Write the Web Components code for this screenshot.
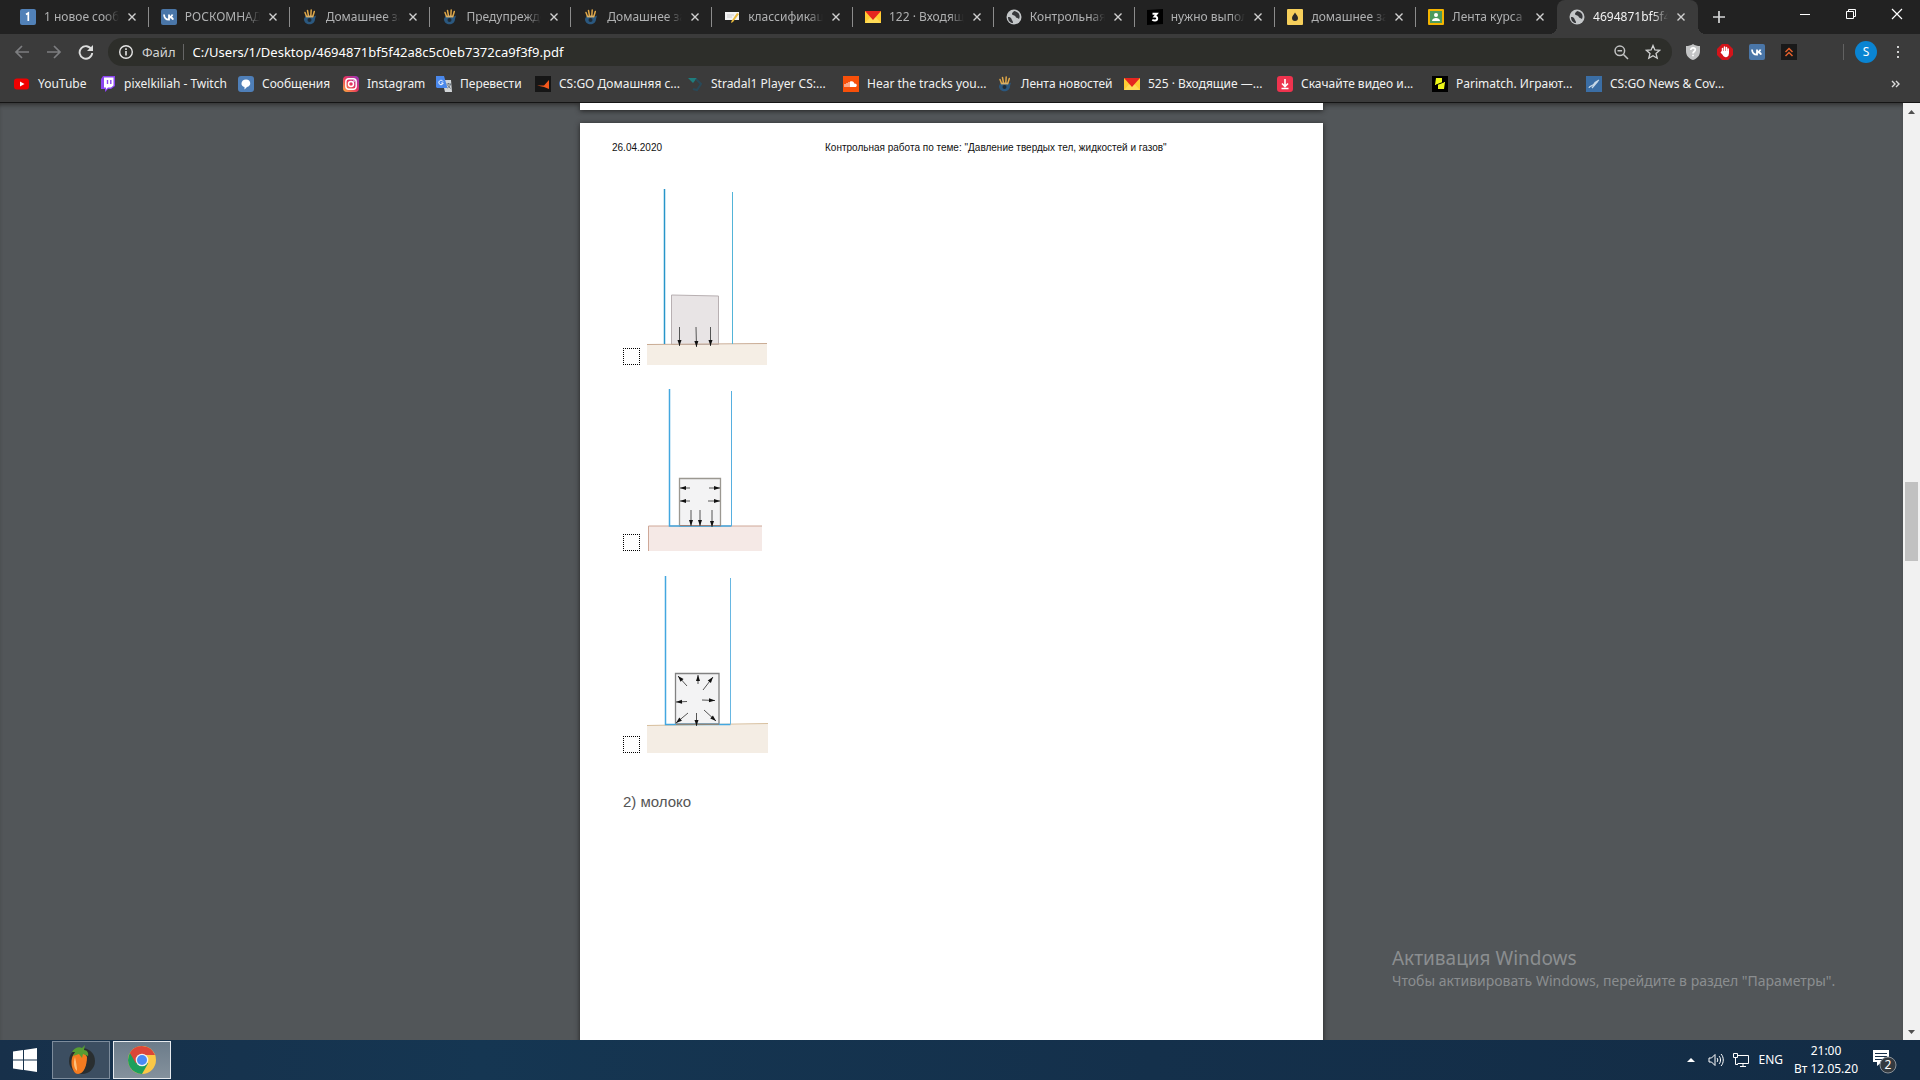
<!DOCTYPE html>
<html lang="ru">
<head>
  <meta charset="UTF-8">
  <meta name="viewport" content="width=device-width, initial-scale=1.0">
  <title>4694871bf5f42a8c5c0eb7372ca9f3f9.pdf</title>
  <style>
    body {
      margin: 0;
      font: 12px/16px "Noto Sans", "Open Sans", sans-serif;
      color: #fff;
      background: #525659;
    }
  </style>
</head>
<body>
  <desktop-screen>
    <browser-tabs slot="top">
      <tab-item icon="one">1 новое сообщение</tab-item>
      <tab-item icon="vk">РОСКОМНАДЗОР</tab-item>
      <tab-item icon="hand">Домашнее задание</tab-item>
      <tab-item icon="hand">Предупреждение</tab-item>
      <tab-item icon="hand">Домашнее задание</tab-item>
      <tab-item icon="note">классификация</tab-item>
      <tab-item icon="mail">122 · Входящие</tab-item>
      <tab-item icon="globe">Контрольная работа</tab-item>
      <tab-item icon="znania">нужно выполнить</tab-item>
      <tab-item icon="drop">домашнее задание</tab-item>
      <tab-item icon="class">Лента курса</tab-item>
      <tab-item icon="globe" active>4694871bf5f42a8c</tab-item>
    </browser-tabs>
    <browser-toolbar slot="top" url="C:/Users/1/Desktop/4694871bf5f42a8c5c0eb7372ca9f3f9.pdf"></browser-toolbar>
    <bookmarks-bar slot="top">
      <book-mark icon="youtube">YouTube</book-mark>
      <book-mark icon="twitch">pixelkiliah - Twitch</book-mark>
      <book-mark icon="message">Сообщения</book-mark>
      <book-mark icon="instagram">Instagram</book-mark>
      <book-mark icon="translate">Перевести</book-mark>
      <book-mark icon="faceit">CS:GO Домашняя с...</book-mark>
      <book-mark icon="stradal">Stradal1 Player CS:...</book-mark>
      <book-mark icon="cloud">Hear the tracks you...</book-mark>
      <book-mark icon="hand">Лента новостей</book-mark>
      <book-mark icon="mail">525 · Входящие —...</book-mark>
      <book-mark icon="download">Скачайте видео и...</book-mark>
      <book-mark icon="pari">Parimatch. Играют...</book-mark>
      <book-mark icon="news">CS:GO News &amp; Cov...</book-mark>
    </bookmarks-bar>
    <pdf-viewer>
      <pdf-page>
        <span slot="date">26.04.2020</span>
        <span slot="title">Контрольная работа по теме: "Давление твердых тел, жидкостей и газов"</span>
        <answer-option kind="solid"></answer-option>
        <answer-option kind="loose"></answer-option>
        <answer-option kind="liquid"></answer-option>
        <span slot="note">2) молоко</span>
      </pdf-page>
      <activation-note slot="over">
        <span slot="title">Активация Windows</span>
        Чтобы активировать Windows, перейдите в раздел "Параметры".
      </activation-note>
    </pdf-viewer>
    <task-bar slot="bottom"></task-bar>
  </desktop-screen>

  <script>
    const vkMark = '<rect width="16" height="16" rx="2" fill="#4a76a8"/><path d="M3 5.500c.2 3 2 5.200 5 5.200V5.500M8 8c2 0 3-1 3.500-2.500M8 8c2.500 0 3.500 1.200 4.200 2.700" fill="none" stroke="#fff" stroke-width="1.800"/>'

    // 16x16 icons of the tabs, the bookmarks and the extensions
    const icons = {
      one: '<rect width="16" height="16" rx="2" fill="#5181b8"/><path d="M6 5.500 8.300 4v8" fill="none" stroke="#fff" stroke-width="1.700"/>',
      vk: vkMark,
      hand: '<path d="M3.500 7 2 10c0 7 11 7 11 0l1-3.500-2 1z" fill="#2b587f"/><path d="M4.500 7.500 3 3.500M6.500 7 5.500 1.500M8.800 7l.4-6M10.800 7.500l1.500-5" stroke="#e0a848" stroke-width="1.500" stroke-linecap="round"/><path d="M4.500 7.500h6.500" stroke="#d8b06a" stroke-width="1.800"/><circle cx="7.500" cy="11" r="2" fill="#1f2c38"/>',
      note: '<path d="M1 3h14v8H1z" fill="#f4f4f4"/><path d="m15 5-6 8-2 1 .5-2L13 4z" fill="#e8b93c"/><path d="M3 6h7M3 8h5" stroke="#ccc"/>',
      mail: '<path d="M0 2h16v12H0z" fill="#fc3"/><path d="M0 14 5.500 8h5L16 14z" fill="#ffdb57"/><path d="M0 2h16L8 11z" fill="#e52620"/>',
      globe: '<circle cx="8" cy="8" r="7.500" fill="#c4c7c9"/><path d="M2 8c2 0 3 .5 3.500 2s1.500 1.500 1.500 4C4 14 2 11.500 2 8zM8 2c-1 1.500-2 1.500-2 3s3 1 3.500 2.500S12 9 13 10c1.500-3 .5-7-5-8z" fill="#36373a"/>',
      znania: '<path d="M0 1 16 0v15L0 16z" fill="#000"/><path d="M5.500 4.800h4.300L7.700 7.500c3.500-.2 3 4 .3 4-1 0-2-.3-2.700-.8" fill="none" stroke="#fff" stroke-width="2"/>',
      drop: '<rect width="16" height="16" rx="1" fill="#f6cf5b"/><path d="M8 3.500c1.500 2.500 3 3.500 3 5.500a3 3 0 0 1-6 0c0-2 1.500-3 3-5.500z" fill="#2b2a28"/>',
      class: '<rect width="16" height="16" rx="1" fill="#f4b400"/><path d="M2 2h12v12H2z" fill="#4d9b5d"/><circle cx="8" cy="6" r="2" fill="#fff"/><path d="M4 12c0-4 8-4 8 0z" fill="#fff"/>',
      youtube: '<rect y="2.500" width="15" height="11" rx="3" fill="#f00000"/><path d="m6 5.500 4.500 2.500L6 10.500z" fill="#fff"/>',
      twitch: '<path d="M3 0h12v10l-4 3H8l-3 3v-3H1V3z" fill="#8b45f0"/><path d="M4 1.500h9.500v8L11 11.500H8l-2 2v-2H4z" fill="#fff"/><path d="M7.500 4v4M10.800 4v4" stroke="#8b45f0" stroke-width="1.400"/>',
      message: '<rect width="16" height="16" rx="3" fill="#4f7fb8"/><path d="M8 3.500c5.500 0 5.500 7 1 7.500L6.500 13.500V11C2 10.500 2.500 3.500 8 3.500z" fill="#fff"/>',
      instagram: '<defs><linearGradient id="g" x1="0" y1="1" x2="1" y2="0"><stop stop-color="#fdb03c"/><stop offset=".5" stop-color="#e6355f"/><stop offset="1" stop-color="#9034c4"/></linearGradient></defs><rect width="16" height="16" rx="4" fill="url(#g)"/><rect x="2.800" y="2.800" width="10.400" height="10.400" rx="3" fill="none" stroke="#fff" stroke-width="1.400"/><circle cx="8" cy="8" r="2.500" fill="none" stroke="#fff" stroke-width="1.400"/><circle cx="11" cy="5" r=".8" fill="#fff"/>',
      translate: '<path d="M6 4h9l1 12H9z" fill="#d2d5d8"/><path d="M0 0h8l3.500 12H1L0 11z" fill="#4a88ec"/><path d="M7 5.500a2.200 2.200 0 1 0 .2 1.500H5.200" fill="none" stroke="#fff"/><path d="M10.500 8H15M12.500 7v1m2 0c-.5 2-1.500 3-3 4m0-3 3 3.500" stroke="#66727c" fill="none"/>',
      faceit: '<path d="M0 0h16v16H0z" fill="#161616"/><path d="M2 9.500h7L14 4v9L9 11z" fill="#f4581c"/>',
      stradal: '<path d="M1 2h9L6 7z" fill="#1f7d7d"/><path d="m9 3 5 5-4 6-4-1" fill="none" stroke="#294958" stroke-width="2"/>',
      cloud: '<path d="M0 0h16v16H0z" fill="#f8500a"/><path d="M2 8v3M4 7v4M6 6v5" stroke="#fff"/><path d="M7 5.500c3-1 4 .5 4.200 2 3-.5 3.500 3.500.8 3.500H7z" fill="#fff"/>',
      download: '<rect width="16" height="16" rx="3" fill="#ee334e"/><path d="M8 3v7M5 7.500 8 10.500l3-3M4.500 12.500h7" fill="none" stroke="#fff" stroke-width="1.600"/>',
      pari: '<path d="M0 0h16v16H0z" fill="#000"/><path d="M4 2h6v4h3l-1 7H6v-4H3z" fill="#eef818"/><path d="m4 9 8-3" stroke="#000"/>',
      news: '<path d="M0 0h16v16H0z" fill="#3b6ea5"/><path d="M3 12c0-2 4-2 5-4s3-3 5-4M6 12l6-7" fill="none" stroke="#c7d8e8" stroke-width="1.200"/>',
      shield: '<path d="M8 0c2 1.500 4.500 2 7 2v5c0 5-3 7.500-7 9-4-1.500-7-4-7-9V2c2.500 0 5-.5 7-2z" fill="#c3c4c5"/><path d="M5.800 6c0-3 4.500-2.500 4.500-.3C10.300 7.500 8 7.500 8 9.500M8 10.800v1.500" fill="none" stroke="#fff" stroke-width="1.700"/>',
      block: '<path d="M5 0h6l5 5v6l-5 5H5l-5-5V5z" fill="#d3141a"/><path d="M5.500 8V4.500M7.500 8V3M9.500 8V3.500M11.200 9V5" stroke="#fff" stroke-width="1.500" stroke-linecap="round"/><path d="M4.800 7h7v3c0 4-5 4-6 1L3.500 8.500z" fill="#fff"/>',
      chevrons: '<path d="M0 0h16v16H0z" fill="#191919"/><path d="m4.500 8 3.500-3.500L11.500 8m-7 4L8 8.500l3.500 3.500" fill="none" stroke="#e2602c" stroke-width="1.500"/>',
      close: '<path d="m4 4 8 8m0-8-8 8" stroke="currentColor" stroke-width="1.600"/>',
      plus: '<path d="M8 2v12M2 8h12" stroke="#d5d6d7" stroke-width="1.700"/>',
      minimize: '<path d="M3 8.500h10" stroke="#fff"/>',
      restore: '<path d="M3.500 5.500h7v7h-7zM5.500 5V3.500h7v7H11" fill="none" stroke="#fff"/>',
      exit: '<path d="m3 3 10 10m0-10L3 13" stroke="#fff" stroke-width="1.200"/>',
      back: '<path d="M15 8H2m6-6L2 8l6 6" fill="none" stroke="#7d7e80" stroke-width="1.700"/>',
      forward: '<path d="M1 8h13M8 2l6 6-6 6" fill="none" stroke="#7d7e80" stroke-width="1.700"/>',
      reload: '<path d="M13.500 5.500A6.300 6.300 0 1 0 14.200 9" fill="none" stroke="#dcdddd" stroke-width="1.900"/><path d="M15 1v6H9z" fill="#dcdddd"/>',
      info: '<circle cx="8" cy="8" r="6.300" fill="none" stroke="#e4e4e4" stroke-width="1.400"/><path d="M8 7v4.500M8 4.300V6" stroke="#e4e4e4" stroke-width="1.600"/>',
      zoom: '<circle cx="6.800" cy="6.800" r="4.800" fill="none" stroke="#c2c3c3" stroke-width="1.500"/><path d="m10.500 10.500 4.500 4.500M4.500 6.800h4.600" stroke="#c2c3c3" stroke-width="1.500"/>',
      star: '<path d="m8 1.500 1.900 4.400 4.800.4L11 9.500l1.200 4.700L8 11.700l-4.200 2.500L5 9.500 1.300 6.300l4.800-.4z" fill="none" stroke="#d0d1d1" stroke-width="1.300"/>',
      dots: '<path d="M7 2h2v2H7zM7 7h2v2H7zM7 12h2v2H7z" fill="#d0d1d1"/>',
      more: '<path d="m4 5 3 3-3 3m4-6 3 3-3 3" fill="none" stroke="#dcdcdc" stroke-width="1.400"/>',
      caret: '<path d="m4 10 4-4 4 4z" fill="#fff"/>',
      volume: '<path d="M1 6h2.500L7 2.500v11L3.500 10H1zM9 6c1 1 1 3 0 4m2-6c2 2 2 6 0 8m2-10c3 3 3 9 0 12" fill="none" stroke="#fff"/>',
      network: '<path d="M4.500 3.500h11v8h-11M10 12v2.500M7 14.500h6M.5 1.500h4v4h-4zM2.500 6v6.500H5" fill="none" stroke="#fff"/>'
    }

    const icon = (name, size = 16) =>
      `<svg width="${size}" height="${size}" viewBox="0 0 16 16" aria-hidden="true">${icons[name]}</svg>`

    const reset = `
      :host, * { box-sizing: border-box; }
      svg { display: block; flex: none; }
      button {
        display: grid;
        place-items: center;
        margin: 0;
        padding: 0;
        border: 0;
        font: inherit;
        color: inherit;
        background: none;
      }
    `

    function define(name, render) {
      customElements.define(name, class extends HTMLElement {
        constructor() {
          super()
          this.attachShadow({mode: 'open'}).innerHTML = `<style>${reset}</style>${render(this)}`
        }
      })
    }

    define('desktop-screen', () => `
      <style>
        :host {
          display: flex;
          flex-direction: column;
          height: 100vh;
          overflow: hidden;
        }
        header {
          border-bottom: 1px solid #151515;
          background: #3b3b3b;
        }
        main {
          flex: 1;
          min-height: 0;
          display: flex;
        }
      </style>
      <header><slot name="top"></slot></header>
      <main><slot></slot></main>
      <slot name="bottom"></slot>
    `)

    define('browser-tabs', () => `
      <style>
        :host {
          display: flex;
          height: 34px;
          padding-left: 8px;
          background: #222;
        }
        .tabs {
          display: flex;
          flex: 0 1 1690px;
          min-width: 0;
        }
        .plus {
          width: 42px;
        }
        .window {
          display: flex;
          height: 28px;
          margin-left: auto;
        }
        .window button {
          width: 46px;
        }
      </style>
      <div class="tabs"><slot></slot></div>
      <button class="plus" aria-label="Новая вкладка">${icon('plus')}</button>
      <div class="window">
        <button aria-label="Свернуть">${icon('minimize')}</button>
        <button aria-label="Восстановить">${icon('restore')}</button>
        <button aria-label="Закрыть">${icon('exit')}</button>
      </div>
    `)

    define('tab-item', el => `
      <style>
        :host {
          position: relative;
          display: flex;
          align-items: center;
          flex: 1 1 0;
          min-width: 0;
          gap: 8px;
          padding-left: 12px;
          color: #b0b1b2;
        }
        :host::after {
          content: "";
          width: 1px;
          height: 20px;
          background: #8c8c8c;
        }
        :host([active]) {
          color: #f2f2f2;
          border-radius: 8px 8px 0 0;
          background: #3b3b3b;
        }
        :host([active])::after,
        :host(:nth-last-child(2))::after {
          background: none;
        }
        /* rounded feet of the open tab */
        :host([active])::before {
          content: "";
          position: absolute;
          bottom: 0;
          left: -8px;
          right: -8px;
          height: 8px;
          background:
            radial-gradient(circle at 0 0, transparent 8px, #3b3b3b 8px) left / 8px 8px no-repeat,
            radial-gradient(circle at 100% 0, transparent 8px, #3b3b3b 8px) right / 8px 8px no-repeat;
        }
        .name {
          display: block;
          flex: 1;
          min-width: 0;
          overflow: hidden;
          white-space: nowrap;
          text-align: left;
          -webkit-mask-image: linear-gradient(90deg, #000 80%, transparent);
          mask-image: linear-gradient(90deg, #000 80%, transparent);
        }
        .close {
          width: 16px;
          margin-left: -3px;
          color: #d0d0d0;
        }
      </style>
      ${icon(el.getAttribute('icon'))}
      <button class="name"><slot></slot></button>
      <button class="close" aria-label="Закрыть вкладку">${icon('close', 14)}</button>
    `)

    define('browser-toolbar', el => `
      <style>
        :host {
          display: flex;
          align-items: center;
          height: 36px;
          padding: 0 6px;
        }
        button {
          width: 32px;
          height: 32px;
        }
        .address {
          display: flex;
          align-items: center;
          flex: 1;
          height: 28px;
          margin: 0 5px 0 6px;
          padding: 0 3px 0 10px;
          border-radius: 14px;
          background: #2d2e2a;
        }
        .address, input {
          font-size: 13px;
          color: #fff;
        }
        label {
          margin-left: 8px;
          padding-right: 7px;
          border-right: 1px solid #666;
          color: #d4d4d4;
        }
        input {
          flex: 1;
          min-width: 0;
          padding: 0 0 0 9px;
          border: 0;
          outline: 0;
          font-family: inherit;
          background: none;
        }
        .avatar {
          width: 22px;
          height: 22px;
          margin: 0 5px 0 11px;
          border-radius: 50%;
          background: #0a84d2;
        }
        .rule {
          width: 1px;
          height: 16px;
          margin-left: 38px;
          background: #626262;
        }
      </style>
      <button aria-label="Назад">${icon('back')}</button>
      <button aria-label="Вперёд">${icon('forward')}</button>
      <button aria-label="Обновить">${icon('reload')}</button>
      <div class="address">
        ${icon('info')}
        <label for="url">Файл</label>
        <input id="url" value="${el.getAttribute('url')}">
        <button aria-label="Масштаб">${icon('zoom')}</button>
        <button aria-label="В закладки">${icon('star')}</button>
      </div>
      <button aria-label="Защита">${icon('shield')}</button>
      <button aria-label="Блокировка">${icon('block')}</button>
      <button aria-label="ВКонтакте">${icon('vk')}</button>
      <button aria-label="Расширение">${icon('chevrons')}</button>
      <span class="rule"></span>
      <button class="avatar">S</button>
      <button aria-label="Меню">${icon('dots')}</button>
    `)

    define('bookmarks-bar', () => `
      <style>
        :host {
          display: flex;
          align-items: center;
          justify-content: space-between;
          height: 32px;
          padding: 0 16px 4px 14px;
        }
        nav {
          display: grid;
          grid-template-columns: 86px 138px 105px 93px 99px 152px 156px 154px 127px 153px 155px 154px 140px;
        }
      </style>
      <nav><slot></slot></nav>
      <button aria-label="Другие закладки">${icon('more')}</button>
    `)

    define('book-mark', el => `
      <style>
        a {
          display: flex;
          align-items: center;
          gap: 8px;
          white-space: nowrap;
          color: #f1f1f1;
          text-decoration: none;
        }
      </style>
      <a href="#">${icon(el.getAttribute('icon'))}<span><slot></slot></span></a>
    `)

    define('pdf-viewer', () => `
      <style>
        :host {
          position: relative;
          display: flex;
          flex: 1;
          min-width: 0;
          background: #525659;
        }
        .pages {
          display: flex;
          flex-direction: column;
          align-items: center;
          flex: 1;
          gap: 13px;
          overflow: hidden;
          box-shadow: inset 0 4px 4px -2px #333;
        }
        .previous {
          flex: none;
          width: 743px;
          height: 7px;
          background: #fff;
          box-shadow: 0 1px 5px #222;
        }
        .scroll {
          display: flex;
          flex-direction: column;
          justify-content: space-between;
          align-items: center;
          width: 17px;
          background: #f1f1f1;
        }
        .scroll button {
          width: 17px;
          height: 17px;
        }
        .lane {
          flex: 1;
          display: flex;
          flex-direction: column;
        }
        .lane::before {
          content: "";
          flex: 362;
        }
        .lane::after {
          content: "";
          flex: 462;
        }
        .thumb {
          flex: 79;
          width: 13px;
          background: #c1c1c1;
        }
      </style>
      <div class="pages">
        <div class="previous"></div>
        <slot></slot>
      </div>
      <div class="scroll">
        <button aria-label="Вверх"><svg width="7" height="4"><path d="M0 4 3.500 0 7 4z" fill="#505050"/></svg></button>
        <div class="lane"><div class="thumb"></div></div>
        <button aria-label="Вниз"><svg width="7" height="4"><path d="m0 0 3.500 4L7 0z" fill="#505050"/></svg></button>
      </div>
      <slot name="over"></slot>
    `)

    define('pdf-page', () => `
      <style>
        :host {
          flex: none;
          width: 743px;
          min-height: 1051px;
          padding: 18px 32px;
          font-family: "Liberation Sans", Arial, sans-serif;
          color: #111;
          background: #fff;
          box-shadow: 0 1px 5px #222;
        }
        header {
          display: grid;
          grid-template-columns: 213px 1fr;
          font-size: 10px;
          line-height: 14px;
        }
        form {
          display: grid;
          gap: 24px;
          margin: 34px 0 39px 11px;
        }
        p {
          margin: 0 0 0 11px;
          font-size: 15px;
          line-height: 20px;
          color: #555;
        }
      </style>
      <header><slot name="date"></slot><slot name="title"></slot></header>
      <form><slot></slot></form>
      <p><slot name="note"></slot></p>
    `)

    // one arrow: a thin shaft and a filled head that points at (x2, y2)
    function arrow([x1, y1, x2, y2]) {
      const angle = Math.atan2(y2 - y1, x2 - x1) * 180 / Math.PI
      return `<path d="M${x1} ${y1}L${x2} ${y2}" stroke="#555"/>
        <path d="M0 0-6-2v4z" fill="#111" transform="translate(${x2} ${y2}) rotate(${angle})"/>`
    }

    const vessels = {
      solid: {
        name: 'Твёрдое тело',
        width: 120,
        height: 176,
        art: `
          <path d="M0 156 120 155v21H0z" fill="#f5eee5"/>
          <path d="M24.500 106 71.500 107v48.500h-47z" fill="#e8e4e5" stroke="#b8b0b2"/>
          <path d="M0 155.500 120 154.500" stroke="#c9ab93"/>
          <path d="M17.500 0v155" stroke="#2795c9" stroke-width="1.500"/>
          <path d="M85.500 3v152" stroke="#52b4d8"/>`,
        arrows: [[32.500, 138, 32.500, 157], [49, 138, 49.500, 158], [63.500, 138, 63.500, 157]]
      },
      loose: {
        name: 'Сыпучее тело',
        width: 115,
        height: 162,
        art: `
          <path d="M1 137h114v25H1z" fill="#f5e9e6"/>
          <path d="M1.500 162v-25H115" fill="none" stroke="#cfa898"/>
          <path d="M32.500 89.500h41V137h-41z" fill="#f3f3f4" stroke="#9b9891" stroke-width="1.300"/>
          <path d="M22.500 0v137h62" fill="none" stroke="#43a7e0" stroke-width="1.500"/>
          <path d="M84.500 2v135" stroke="#56afe0"/>
          <path d="M33 136.500h41" stroke="#99807a"/>`,
        arrows: [
          [43, 99, 33, 99], [43, 112, 33, 112], [62, 99, 73, 99], [61, 112, 73, 112],
          [44, 121, 44, 137], [53, 121, 53, 137], [65, 121, 65, 138]
        ]
      },
      liquid: {
        name: 'Жидкость',
        width: 121,
        height: 178,
        art: `
          <path d="M0 150 121 149v29H0z" fill="#f4ede4"/>
          <path d="M0 150.500 60 149.500 121 148.500" fill="none" stroke="#d8c09f"/>
          <path d="M28.500 98.500H72V149H28.500z" fill="#f3f3f4" stroke="#828282" stroke-width="1.300"/>
          <path d="M18.500 1v148.500h65" fill="none" stroke="#43a7e0" stroke-width="1.500"/>
          <path d="M83.500 3v146" stroke="#67b7e2"/>
          <path d="M29 149.500h43" stroke="#8c8477"/>`,
        arrows: [
          [40, 111, 31, 101], [51, 109, 51, 100], [56, 115, 66, 102], [40, 126.500, 29, 127],
          [55, 125, 68, 125.500], [41, 138, 29, 148], [49.500, 138, 49.500, 151], [57, 135, 69, 146]
        ]
      }
    }

    define('answer-option', el => {
      const {name, width, height, art, arrows} = vessels[el.getAttribute('kind')]
      return `
        <style>
          :host {
            display: block;
          }
          label {
            display: flex;
            align-items: flex-end;
            gap: 7px;
          }
          input {
            appearance: none;
            width: 17px;
            height: 17px;
            margin: 0;
            border: 1px dotted #000;
          }
        </style>
        <label>
          <input type="checkbox" aria-label="${name}">
          <svg width="${width}" height="${height}">${art}${arrows.map(arrow).join('')}</svg>
        </label>
      `
    })

    define('activation-note', () => `
      <style>
        :host {
          position: absolute;
          right: 74px;
          bottom: 49px;
          width: 454px;
          white-space: nowrap;
          font-size: 14px;
          line-height: 20px;
          color: #8b8e90;
        }
        h2 {
          margin: 0;
          font-size: 19px;
          font-weight: 400;
          line-height: 26px;
        }
      </style>
      <h2><slot name="title"></slot></h2>
      <slot></slot>
    `)

    define('task-bar', () => `
      <style>
        :host {
          display: flex;
          align-items: center;
          gap: 3px;
          height: 40px;
          padding-right: 23px;
          background: linear-gradient(90deg, #17304a, #153652 25%, #14304b 60%, #132c45);
        }
        .start {
          width: 49px;
          height: 40px;
        }
        .app {
          width: 58px;
          height: 38px;
          border: 1px solid #7d8c9c;
          background: #3c4e61;
        }
        .app.open {
          border-color: #e6eaee;
          background: linear-gradient(#6c7c8a, #84919c);
        }
        .tray {
          display: flex;
          align-items: center;
          gap: 9px;
          margin-left: auto;
        }
        time {
          width: 68px;
          text-align: center;
          line-height: 18px;
        }
      </style>
      <button class="start" aria-label="Пуск">
        <svg width="24" height="24"><path d="M0 3.500 10 2v9.500H0zM11 2 24 0v11.500H11zM0 12.500h10V22L0 20.500zM11 12.500h13V24l-13-2z" fill="#fff"/></svg>
      </button>
      <button class="app" aria-label="FL Studio">
        <svg width="30" height="30">
          <circle cx="16" cy="16" r="13" fill="#292e30"/>
          <path d="M8 9c5-4 11-1 13 3 0 8-3 17-9 17S3 15 8 9z" fill="#f47b20"/>
          <path d="M9 12c-2 6-1 11 2 14 0-5-1-9-2-14z" fill="#ffc07a"/>
          <path d="M6 7c2-4 7-6 10-4l3-3-1 5c3 0 5 3 4 6l-5-2-1 4-3-4-6 2 2-4z" fill="#579c33"/>
        </svg>
      </button>
      <button class="app open" aria-label="Google Chrome">
        <svg width="30" height="30">
          <circle cx="15" cy="15" r="14" fill="#fbc846"/>
          <path d="M2.900 8A14 14 0 0 0 15 29l6-10.500L15 15z" fill="#1da05c"/>
          <path d="M2.900 8A14 14 0 0 1 28 10H15L9 18.500z" fill="#dc4638"/>
          <circle cx="15" cy="15" r="6.300" fill="#f1f1f1"/>
          <circle cx="15" cy="15" r="5" fill="#4a8af4"/>
        </svg>
      </button>
      <div class="tray">
        <button aria-label="Скрытые значки">${icon('caret')}</button>
        <button aria-label="Громкость">${icon('volume')}</button>
        <button aria-label="Сеть">${icon('network')}</button>
        <button>ENG</button>
        <time datetime="2020-05-12T21:00">21:00<br>Вт 12.05.20</time>
        <button aria-label="Уведомления: 2">
          <svg width="28" height="28">
            <path d="M4 4h16v12h-7l-5 4v-4H4z" fill="#fff"/>
            <path d="M6 7.500h12M6 10.500h12M6 13.500h8" stroke="#17304a"/>
            <circle cx="19" cy="19" r="8" fill="#343a40" stroke="#8b9299"/>
            <text x="19" y="23" text-anchor="middle" font-size="12" fill="#fff">2</text>
          </svg>
        </button>
      </div>
    `)
  </script>
</body>
</html>
